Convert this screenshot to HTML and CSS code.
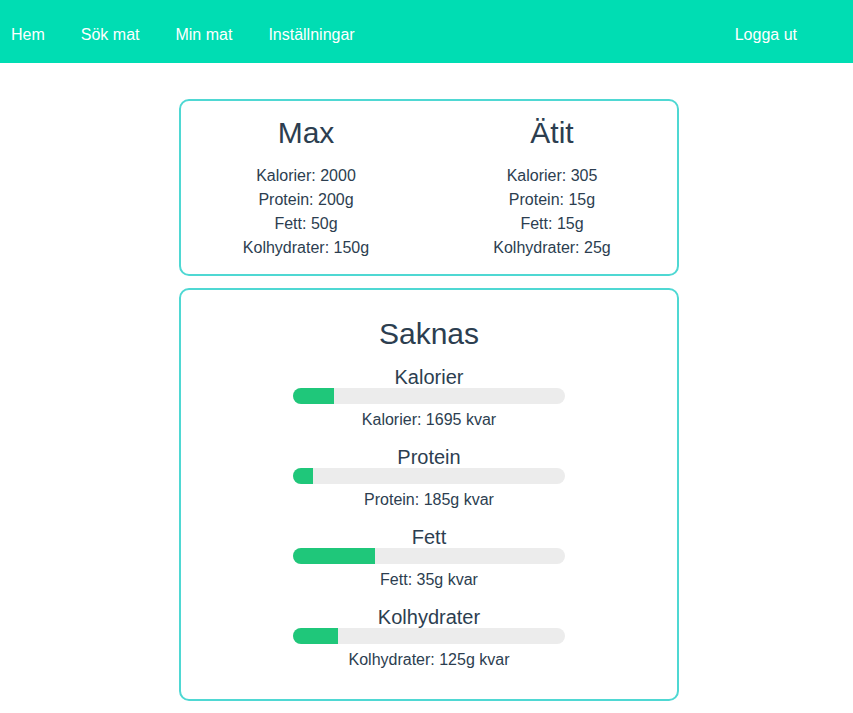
FILE: index.html
```html
<!DOCTYPE html>
<html lang="sv">
<head>
<meta charset="utf-8">
<title>Min mat</title>
<link rel="stylesheet" href="styles.css">
</head>
<body>
<nav class="nav">
  <div class="nav-left">
    <a class="nav-link" href="#">Hem</a>
    <a class="nav-link" href="#">Sök mat</a>
    <a class="nav-link" href="#">Min mat</a>
    <a class="nav-link" href="#">Inställningar</a>
  </div>
  <a class="nav-link" href="#">Logga ut</a>
</nav>
<main class="main">
  <section class="card card-summary">
    <div class="col">
      <h2 class="title title-summary">Max</h2>
      <p class="line">Kalorier: 2000</p>
      <p class="line">Protein: 200g</p>
      <p class="line">Fett: 50g</p>
      <p class="line">Kolhydrater: 150g</p>
    </div>
    <div class="col">
      <h2 class="title title-summary">Ätit</h2>
      <p class="line">Kalorier: 305</p>
      <p class="line">Protein: 15g</p>
      <p class="line">Fett: 15g</p>
      <p class="line">Kolhydrater: 25g</p>
    </div>
  </section>
  <section class="card card-missing">
    <h2 class="title">Saknas</h2>
    <div class="group">
      <h3 class="group-title">Kalorier</h3>
      <div class="bar"><div class="fill" style="width: 15.25%"></div></div>
      <p class="line">Kalorier: 1695 kvar</p>
    </div>
    <div class="group">
      <h3 class="group-title">Protein</h3>
      <div class="bar"><div class="fill" style="width: 7.5%"></div></div>
      <p class="line">Protein: 185g kvar</p>
    </div>
    <div class="group">
      <h3 class="group-title">Fett</h3>
      <div class="bar"><div class="fill" style="width: 30%"></div></div>
      <p class="line">Fett: 35g kvar</p>
    </div>
    <div class="group">
      <h3 class="group-title">Kolhydrater</h3>
      <div class="bar"><div class="fill" style="width: 16.67%"></div></div>
      <p class="line">Kolhydrater: 125g kvar</p>
    </div>
  </section>
</main>
</body>
</html>
```
FILE: styles.css
```css
* { box-sizing: border-box; }
body {
  margin: 0;
  font-family: "Liberation Sans", Arial, sans-serif;
  color: #2c3e50;
  background: #fff;
}
.nav {
  height: 63px;
  background: #00ddb3;
  display: flex;
  align-items: center;
  justify-content: space-between;
  padding: 0 56px 0 11px;
}
.nav-left {
  display: flex;
  gap: 36px;
}
.nav-link {
  color: #fff;
  text-decoration: none;
  font-size: 16px;
  line-height: 18px;
  margin-top: 7px;
}
.main {
  display: flex;
  flex-direction: column;
  align-items: center;
  gap: 12px;
  padding: 36px 0 0 5px;
}
.card {
  width: 500px;
  border: 2px solid #4fd8d3;
  border-radius: 10px;
  text-align: center;
}
.card-summary {
  display: flex;
  padding: 15px 0 14px;
}
.col {
  flex: 1;
  margin-left: 2px;
}
.col + .col { margin-left: 0; margin-right: 2px; }
.title {
  margin: 0 0 13px;
  font-size: 30px;
  font-weight: normal;
  line-height: 34px;
}
.title-summary { margin-bottom: 14px; }
.line {
  margin: 0;
  font-size: 16px;
  line-height: 24px;
}
.card-missing {
  display: flex;
  flex-direction: column;
  align-items: center;
  padding: 27px 0 15px;
}
.group {
  width: 272px;
  margin-bottom: 12px;
}
.group-title {
  margin: 0;
  padding-top: 2px;
  font-size: 20px;
  font-weight: normal;
  line-height: 22px;
}
.bar {
  height: 16px;
  background: #ececec;
  border-radius: 8px;
  overflow: hidden;
  margin-bottom: 4px;
}
.fill {
  height: 100%;
  background: #1fc77a;
}
```
